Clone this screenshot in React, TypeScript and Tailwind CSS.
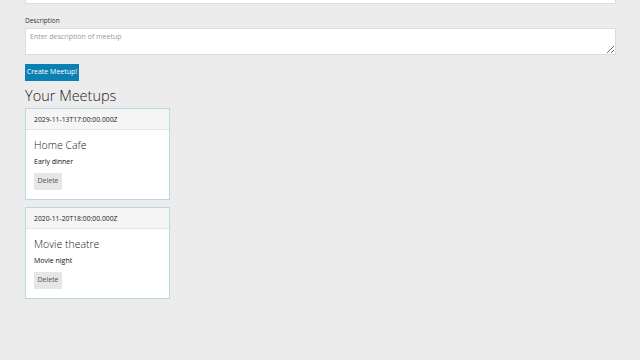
const meetups = [
  { id: 1, date: "2029-11-13T17:00:00.000Z", name: "Home Cafe", description: "Early dinner" },
  { id: 2, date: "2020-11-20T18:00:00.000Z", name: "Movie theatre", description: "Movie night" },
];

function MeetupCard({ date, name, description }: { date: string; name: string; description: string }) {
  return (
    <div className="w-[145px] border border-[#b9d8e3] bg-white">
      <div className="h-[21px] border-b border-[#e6e6e6] bg-[#f5f5f5] px-[8px] text-[6.8px] leading-[21px] text-[#222]">
        {date}
      </div>
      <div className="px-[8px] pt-[7px] pb-[9px]">
        <h3 className="text-[10.5px] font-light leading-[16px] text-[#222]">{name}</h3>
        <p className="mt-[3px] text-[7px] leading-[12px] text-[#111]">{description}</p>
        <button className="mt-[5px] block h-[17px] w-[28px] rounded-[1px] bg-[#e6e6e6] text-[7px] text-[#555]">
          Delete
        </button>
      </div>
    </div>
  );
}

export default function App() {
  return (
    <div className="h-[360px] w-[640px] overflow-hidden bg-[#ececec] font-['Open_Sans',sans-serif]">
      <div className="ml-[25px] w-[591px]">
        <div className="-mt-[22px] h-[26px] border border-[#dcdcdc] bg-white" />
        <label className="mt-[12px] block text-[6.5px] leading-[10px] text-[#333]">Description</label>
        <textarea
          placeholder="Enter description of meetup"
          className="mt-[2px] block h-[27px] w-full resize-y border border-[#dcdcdc] bg-white px-[4px] py-[3px] text-[7px] leading-[10px] placeholder:text-[#999] outline-none"
        />
        <button className="mt-[9px] block h-[17px] w-[54px] bg-[#0b80b3] text-[7px] text-white">Create Meetup!</button>
        <h2 className="mt-[5px] text-[14.5px] font-light leading-[20px] text-[#222]">Your Meetups</h2>
        <div className="mt-[2px] flex flex-col gap-[7px]">
          {meetups.map((m) => (
            <MeetupCard key={m.id} {...m} />
          ))}
        </div>
      </div>
    </div>
  );
}
